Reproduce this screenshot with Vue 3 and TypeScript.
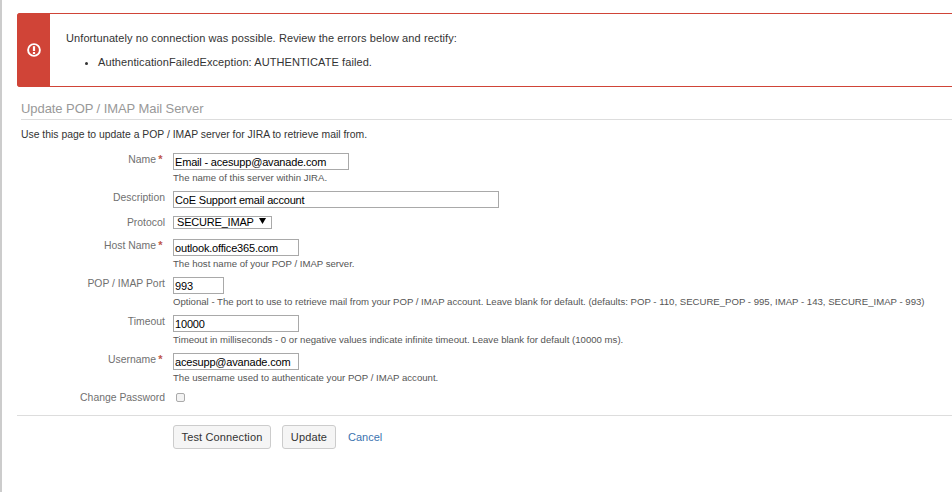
<script setup lang="ts">
interface Field {
  label: string
  value: string
  required?: boolean
  hint?: string
  size: string
}

const top: Field[] = [
  { label: 'Name', value: 'Email - acesupp@avanade.com', required: true, hint: 'The name of this server within JIRA.', size: 'medium' },
  { label: 'Description', value: 'CoE Support email account', size: 'long' },
]

const rest: Field[] = [
  { label: 'Host Name', value: 'outlook.office365.com', required: true, hint: 'The host name of your POP / IMAP server.', size: 'short' },
  { label: 'POP / IMAP Port', value: '993', hint: 'Optional - The port to use to retrieve mail from your POP / IMAP account. Leave blank for default. (defaults: POP - 110, SECURE_POP - 995, IMAP - 143, SECURE_IMAP - 993)', size: 'tiny' },
  { label: 'Timeout', value: '10000', hint: 'Timeout in milliseconds - 0 or negative values indicate infinite timeout. Leave blank for default (10000 ms).', size: 'short' },
  { label: 'Username', value: 'acesupp@avanade.com', required: true, hint: 'The username used to authenticate your POP / IMAP account.', size: 'short' },
]
</script>

<template>
  <div class="page">
    <div class="error">
      <div class="error-icon">
        <svg width="14" height="14" viewBox="0 0 14 14" aria-hidden="true">
          <circle cx="7" cy="7" r="5.9" fill="none" stroke="#fff" stroke-width="1.9" />
          <rect x="5.9" y="3.2" width="2.2" height="4.8" fill="#fff" />
          <rect x="5.9" y="9" width="2.2" height="2" fill="#fff" />
        </svg>
      </div>
      <div class="error-body">
        <p>Unfortunately no connection was possible. Review the errors below and rectify:</p>
        <ul>
          <li>AuthenticationFailedException: AUTHENTICATE failed.</li>
        </ul>
      </div>
    </div>

    <h2 class="title">Update POP / IMAP Mail Server</h2>
    <p class="intro">Use this page to update a POP / IMAP server for JIRA to retrieve mail from.</p>

    <form class="form" @submit.prevent>
      <div v-for="f in top" :key="f.label" class="row" :class="{ 'with-hint': f.hint }">
        <label class="label">{{ f.label }}<span v-if="f.required" class="req">*</span></label>
        <div class="control">
          <input class="text" :class="f.size" :value="f.value" />
          <div v-if="f.hint" class="hint">{{ f.hint }}</div>
        </div>
      </div>

      <div class="row protocol">
        <label class="label">Protocol</label>
        <div class="control">
          <div class="select-wrap">
            <select class="select"><option>SECURE_IMAP</option></select>
            <svg class="caret" width="7" height="6" viewBox="0 0 7 6" aria-hidden="true"><path d="M0 0h7L3.5 6z" fill="#000" /></svg>
          </div>
        </div>
      </div>

      <div v-for="f in rest" :key="f.label" class="row with-hint">
        <label class="label">{{ f.label }}<span v-if="f.required" class="req">*</span></label>
        <div class="control">
          <input class="text" :class="f.size" :value="f.value" />
          <div class="hint">{{ f.hint }}</div>
        </div>
      </div>

      <div class="row check">
        <label class="label">Change Password</label>
        <div class="control"><input class="checkbox" type="checkbox" /></div>
      </div>

      <div class="actions">
        <button class="btn test" type="button">Test Connection</button>
        <button class="btn update" type="button">Update</button>
        <a class="cancel" href="#">Cancel</a>
      </div>
    </form>
  </div>
</template>

<style>
html, body { margin: 0; background: #fff; }
</style>

<style scoped>
.page {
  box-sizing: border-box;
  width: 952px;
  height: 492px;
  overflow: hidden;
  border-left: 2px solid #ccc;
  padding: 13px 0 0 15px;
  font-family: "Liberation Sans", Arial, sans-serif;
  color: #333;
}
.error {
  display: flex;
  box-sizing: border-box;
  height: 74px;
  margin-right: -4px;
  border: 1px solid #d04437;
  border-radius: 3px 0 0 3px;
  background: #fff;
}
.error-icon {
  display: flex;
  align-items: center;
  justify-content: center;
  width: 33px;
  margin: -1px 0 -1px -1px;
  background: #d04437;
  border-radius: 3px 0 0 3px;
}
.error-body {
  padding: 17px 0 0 16px;
  font-size: 11px;
  line-height: 15px;
  letter-spacing: 0.09px;
  color: #333;
}
.error-body p { margin: 0; }
.error-body ul { margin: 9px 0 0; padding: 0 0 0 32px; }
.title {
  margin: 14px 0 0 4px;
  padding-bottom: 2px;
  border-bottom: 1px solid #ddd;
  font-size: 13px;
  line-height: 16px;
  letter-spacing: -0.07px;
  font-weight: 400;
  color: #999;
}
.intro {
  margin: 8px 0 0 4px;
  font-size: 10.4px;
  line-height: 13px;
  color: #333;
}
.form { margin: 12px 0 0; }
.row { display: flex; margin-bottom: 8px; }
.row.with-hint { margin-bottom: 7px; }
.row.protocol { margin-bottom: 10px; }
.label {
  box-sizing: border-box;
  width: 156px;
  height: 13px;
  padding: 0 8px 0 0;
  text-align: right;
  font-size: 10.4px;
  line-height: 13px;
  color: #707070;
}
.req {
  display: inline-block;
  width: 9px;
  height: 0;
  line-height: 0;
  text-align: center;
  font-size: 11px;
  font-weight: 700;
  color: #c0564c;
}
.control { min-width: 0; }
.text {
  display: block;
  box-sizing: border-box;
  height: 17px;
  padding: 0 1px;
  border: 1px solid #a9a9a9;
  border-radius: 0;
  outline: none;
  background: #fff;
  font-family: inherit;
  font-size: 11px;
  letter-spacing: -0.18px;
  color: #000;
}
.text.medium { width: 176px; }
.text.long { width: 326px; }
.text.short { width: 126px; }
.text.tiny { width: 51px; }
.hint {
  margin-top: 1px;
  font-size: 9.6px;
  line-height: 13px;
  white-space: nowrap;
  color: #555;
}
.select-wrap { position: relative; width: 99px; height: 13px; }
.select {
  appearance: none;
  display: block;
  box-sizing: border-box;
  width: 99px;
  height: 13px;
  padding: 0 0 0 3px;
  border: 1px solid #a9a9a9;
  border-radius: 0;
  background: #fff;
  font-family: inherit;
  font-size: 11px;
  line-height: 11px;
  letter-spacing: -0.2px;
  color: #000;
}
.caret { position: absolute; right: 6px; top: 2px; }
.row.check { margin-bottom: 0; height: 24px; }
.checkbox {
  appearance: none;
  display: block;
  box-sizing: border-box;
  width: 9px;
  height: 9px;
  margin: 2px 0 0 3px;
  border: 1px solid #aaa;
  border-radius: 2px;
  background: #f3f3f3;
}
.actions {
  display: flex;
  align-items: center;
  margin: 0 -4px 0 0;
  padding: 9px 0 0 156px;
  border-top: 1px solid #ddd;
}
.btn {
  box-sizing: border-box;
  height: 24px;
  padding: 0;
  border: 1px solid #ccc;
  border-radius: 3px;
  background: #f5f5f5;
  font-family: inherit;
  font-size: 11px;
  letter-spacing: 0.13px;
  color: #333;
}
.btn.test { width: 98px; }
.btn.update { width: 54px; margin-left: 11px; }
.cancel {
  margin-left: 12px;
  font-size: 11px;
  color: #3b73af;
  text-decoration: none;
}
</style>
